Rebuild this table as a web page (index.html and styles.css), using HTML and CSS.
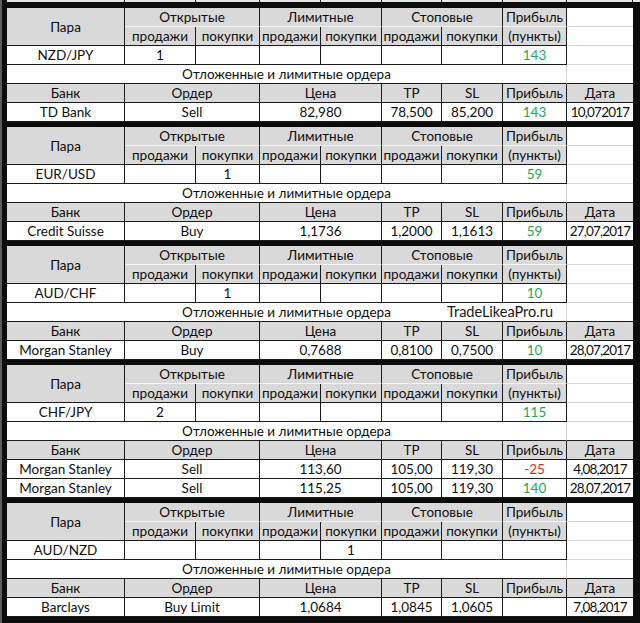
FILE: index.html
```html
<!DOCTYPE html>
<html lang="ru">
<head>
<meta charset="utf-8">
<title>Ордера</title>
<link rel="stylesheet" href="styles.css">
</head>
<body>
<div class="sheet">
  <div class="fragment"><span></span><span></span><span></span><span></span><span></span><span></span><span></span><span></span><span></span></div>

  <table class="sec">
    <colgroup><col class="w1"><col class="w2"><col class="w3"><col class="w4"><col class="w5"><col class="w6"><col class="w7"><col class="w8"><col class="w9"></colgroup>
    <tr><td class="hd" rowspan="2">Пара</td><td class="hd grp" colspan="2">Открытые</td><td class="hd grp" colspan="2">Лимитные</td><td class="hd grp" colspan="2">Стоповые</td><td class="hd grp">Прибыль</td><td class="free"></td></tr>
    <tr><td class="hd">продажи</td><td class="hd">покупки</td><td class="hd">продажи</td><td class="hd">покупки</td><td class="hd">продажи</td><td class="hd">покупки</td><td class="hd">(пункты)</td><td class="free"></td></tr>
    <tr><td>NZD/JPY</td><td>1</td><td></td><td></td><td></td><td></td><td></td><td class="g">143</td><td class="free"></td></tr>
    <tr><td class="note" colspan="8">Отложенные и лимитные ордера</td><td class="free dark"></td></tr>
    <tr><td class="hd">Банк</td><td class="hd" colspan="2">Ордер</td><td class="hd" colspan="2">Цена</td><td class="hd">TP</td><td class="hd">SL</td><td class="hd">Прибыль</td><td class="hd end">Дата</td></tr>
    <tr><td>TD Bank</td><td colspan="2">Sell</td><td colspan="2">82,980</td><td>78,500</td><td>85,200</td><td class="g">143</td><td class="end dt">10,072017</td></tr>
  </table>

  <table class="sec">
    <colgroup><col class="w1"><col class="w2"><col class="w3"><col class="w4"><col class="w5"><col class="w6"><col class="w7"><col class="w8"><col class="w9"></colgroup>
    <tr><td class="hd" rowspan="2">Пара</td><td class="hd grp" colspan="2">Открытые</td><td class="hd grp" colspan="2">Лимитные</td><td class="hd grp" colspan="2">Стоповые</td><td class="hd grp">Прибыль</td><td class="free"></td></tr>
    <tr><td class="hd">продажи</td><td class="hd">покупки</td><td class="hd">продажи</td><td class="hd">покупки</td><td class="hd">продажи</td><td class="hd">покупки</td><td class="hd">(пункты)</td><td class="free"></td></tr>
    <tr><td>EUR/USD</td><td></td><td>1</td><td></td><td></td><td></td><td></td><td class="g">59</td><td class="free"></td></tr>
    <tr><td class="note" colspan="8">Отложенные и лимитные ордера</td><td class="free dark"></td></tr>
    <tr><td class="hd">Банк</td><td class="hd" colspan="2">Ордер</td><td class="hd" colspan="2">Цена</td><td class="hd">TP</td><td class="hd">SL</td><td class="hd">Прибыль</td><td class="hd end">Дата</td></tr>
    <tr><td>Credit Suisse</td><td colspan="2">Buy</td><td colspan="2">1,1736</td><td>1,2000</td><td>1,1613</td><td class="g">59</td><td class="end dt">27,07,2017</td></tr>
  </table>

  <table class="sec">
    <colgroup><col class="w1"><col class="w2"><col class="w3"><col class="w4"><col class="w5"><col class="w6"><col class="w7"><col class="w8"><col class="w9"></colgroup>
    <tr><td class="hd" rowspan="2">Пара</td><td class="hd grp" colspan="2">Открытые</td><td class="hd grp" colspan="2">Лимитные</td><td class="hd grp" colspan="2">Стоповые</td><td class="hd grp">Прибыль</td><td class="free"></td></tr>
    <tr><td class="hd">продажи</td><td class="hd">покупки</td><td class="hd">продажи</td><td class="hd">покупки</td><td class="hd">продажи</td><td class="hd">покупки</td><td class="hd">(пункты)</td><td class="free"></td></tr>
    <tr><td>AUD/CHF</td><td></td><td>1</td><td></td><td></td><td></td><td></td><td class="g">10</td><td class="free"></td></tr>
    <tr><td class="note" colspan="8">Отложенные и лимитные ордера<span class="wm">TradeLikeaPro.ru</span></td><td class="free dark"></td></tr>
    <tr><td class="hd">Банк</td><td class="hd" colspan="2">Ордер</td><td class="hd" colspan="2">Цена</td><td class="hd">TP</td><td class="hd">SL</td><td class="hd">Прибыль</td><td class="hd end">Дата</td></tr>
    <tr><td>Morgan Stanley</td><td colspan="2">Buy</td><td colspan="2">0,7688</td><td>0,8100</td><td>0,7500</td><td class="g">10</td><td class="end dt">28,07,2017</td></tr>
  </table>

  <table class="sec">
    <colgroup><col class="w1"><col class="w2"><col class="w3"><col class="w4"><col class="w5"><col class="w6"><col class="w7"><col class="w8"><col class="w9"></colgroup>
    <tr><td class="hd" rowspan="2">Пара</td><td class="hd grp" colspan="2">Открытые</td><td class="hd grp" colspan="2">Лимитные</td><td class="hd grp" colspan="2">Стоповые</td><td class="hd grp">Прибыль</td><td class="free"></td></tr>
    <tr><td class="hd">продажи</td><td class="hd">покупки</td><td class="hd">продажи</td><td class="hd">покупки</td><td class="hd">продажи</td><td class="hd">покупки</td><td class="hd">(пункты)</td><td class="free"></td></tr>
    <tr><td>CHF/JPY</td><td>2</td><td></td><td></td><td></td><td></td><td></td><td class="g">115</td><td class="free"></td></tr>
    <tr><td class="note" colspan="8">Отложенные и лимитные ордера</td><td class="free dark"></td></tr>
    <tr><td class="hd">Банк</td><td class="hd" colspan="2">Ордер</td><td class="hd" colspan="2">Цена</td><td class="hd">TP</td><td class="hd">SL</td><td class="hd">Прибыль</td><td class="hd end">Дата</td></tr>
    <tr><td>Morgan Stanley</td><td colspan="2">Sell</td><td colspan="2">113,60</td><td>105,00</td><td>119,30</td><td class="r">-25</td><td class="end dt">4,08,2017</td></tr>
    <tr><td>Morgan Stanley</td><td colspan="2">Sell</td><td colspan="2">115,25</td><td>105,00</td><td>119,30</td><td class="g">140</td><td class="end dt">28,07,2017</td></tr>
  </table>

  <table class="sec">
    <colgroup><col class="w1"><col class="w2"><col class="w3"><col class="w4"><col class="w5"><col class="w6"><col class="w7"><col class="w8"><col class="w9"></colgroup>
    <tr><td class="hd" rowspan="2">Пара</td><td class="hd grp" colspan="2">Открытые</td><td class="hd grp" colspan="2">Лимитные</td><td class="hd grp" colspan="2">Стоповые</td><td class="hd grp">Прибыль</td><td class="free"></td></tr>
    <tr><td class="hd">продажи</td><td class="hd">покупки</td><td class="hd">продажи</td><td class="hd">покупки</td><td class="hd">продажи</td><td class="hd">покупки</td><td class="hd">(пункты)</td><td class="free"></td></tr>
    <tr><td>AUD/NZD</td><td></td><td></td><td></td><td>1</td><td></td><td></td><td></td><td class="free"></td></tr>
    <tr><td class="note" colspan="8">Отложенные и лимитные ордера</td><td class="free dark"></td></tr>
    <tr><td class="hd">Банк</td><td class="hd" colspan="2">Ордер</td><td class="hd" colspan="2">Цена</td><td class="hd">TP</td><td class="hd">SL</td><td class="hd">Прибыль</td><td class="hd end">Дата</td></tr>
    <tr><td>Barclays</td><td colspan="2">Buy Limit</td><td colspan="2">1,0684</td><td>1,0845</td><td>1,0605</td><td></td><td class="end dt">7,08,2017</td></tr>
  </table>
</div>
</body>
</html>
```

FILE: styles.css
```css
html, body {
  margin: 0;
  padding: 0;
  background: #0c0c0c;
}

body {
  font-family: Lato, "Open Sans", "Noto Sans", sans-serif;
  font-size: 13.5px;
  color: #0e0e0e;
}

.sheet {
  width: 640px;
  height: 623px;
  box-sizing: border-box;
  border-left: 2px solid #5c5c5c;
  padding-left: 5px;
  overflow: hidden;
}

.fragment {
  display: grid;
  grid-template-columns: 118px 71px 64px 61px 61px 60px 61px 64px 66px;
  height: 2px;
  margin-bottom: 6px;
  background: #e6e6e6;
}

.fragment span {
  border-right: 1px solid #222;
}

.sec {
  border-collapse: separate;
  border-spacing: 0;
  table-layout: fixed;
  width: 626px;
  margin-bottom: 5px;
  background: #fff;
}

.w1 { width: 118px; }
.w2 { width: 71px; }
.w3 { width: 64px; }
.w4 { width: 61px; }
.w5 { width: 61px; }
.w6 { width: 60px; }
.w7 { width: 61px; }
.w8 { width: 64px; }
.w9 { width: 66px; }

.sec td {
  box-sizing: border-box;
  height: 19px;
  padding: 0;
  line-height: 18px;
  text-align: center;
  white-space: nowrap;
  overflow: hidden;
  border-right: 1px solid #1a1a1a;
  border-bottom: 1px solid #1a1a1a;
}

.sec td.hd {
  background: #d9d9d9;
}

.sec td.grp {
  border-bottom-color: #f4f4f4;
}

.sec td.free {
  border-right: none;
  border-bottom-color: #d6d6d6;
  background: #fff;
}

.sec td.free.dark {
  border-bottom-color: #1a1a1a;
}

.sec td.note {
  position: relative;
  overflow: visible;
  border-right-color: #d6d6d6;
}

.sec td.end {
  border-right: none;
}

.sec td.dt {
  letter-spacing: -0.8px;
}

.g {
  color: #22a855;
}

.r {
  color: #ee2424;
}

.wm {
  position: absolute;
  left: 440px;
  top: 0;
  font-size: 14.5px;
  color: #161616;
}
```
